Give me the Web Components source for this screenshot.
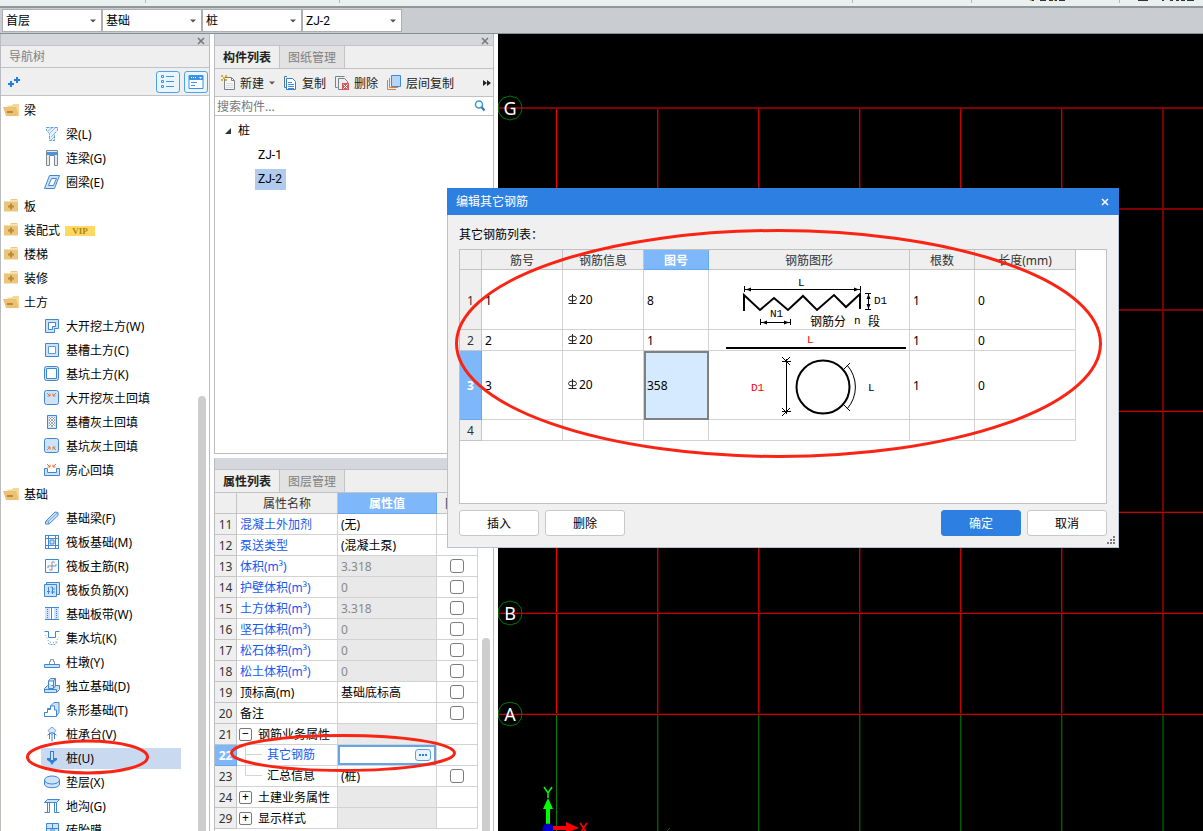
<!DOCTYPE html>
<html lang="zh-CN">
<head>
<meta charset="utf-8">
<title>编辑其它钢筋</title>
<style>
  html, body { height: 100%; margin: 0; }
  body { overflow: hidden; background: #fff; color: #000; font: 12px/16px "Noto Sans", "Noto Sans CJK SC", sans-serif; }
</style>
</head>
<body>
<modeling-app></modeling-app>
<script>
const BASE = `*{box-sizing:border-box} button,input,select{font:inherit;color:inherit;margin:0} ul{list-style:none;margin:0;padding:0} svg{display:block}`;
class View extends HTMLElement {
  constructor() {
    super();
    this.attachShadow({ mode: 'open' });
  }
  connectedCallback() {
    const t = document.createElement('template');
    t.innerHTML = `<style>${BASE}${this.css()}</style>${this.html()}`;
    this.shadowRoot.replaceChildren(t.content.cloneNode(true));
  }
  css() { return ':host{display:block}'; }
  html() { return '<slot></slot>'; }
}

/* ---------- icons ---------- */
const B = 'stroke="#3f86d3" fill="none"', L = 'stroke="#3f86d3" fill="#cfe3f8"', O = 'stroke="#e0763a" fill="none"', G = 'stroke="#87929a" fill="none"';
const ICONS = {
  open: '<path d="M4 3.500h5l1-1.500h6v11h-3z" fill="#f4d79b"/><path d="M0 5h13l3 9H3z" fill="#ecc176"/><path d="M4 9h6v2H4z" fill="#b98a35"/>',
  closed: '<path d="M1 3h14v10.500H1z" fill="#ecc57c"/><path d="M8 1h6l1 1.500H7z" fill="#ecc57c"/><path d="M1 3h14v1H1z" fill="#f6dca6"/><path d="M7 5.500h2v2h2v2H9v2H7v-2H5v-2h2z" fill="#b98a35"/>',
  beam: `<path d="M2.500 1.500h11v3l-3 3v7h-5v-7l-3-3z" fill="#e8f2fd" stroke="#5b9ce0" stroke-dasharray="3 1"/><path d="M4 5l4-3M6 7l5-5M7 11l3-3M7 14l3-3" stroke="#8fb9e8"/>`,
  link: '<path d="M2.500 15.500v-15h11v15h-3v-10h-5v10z" fill="#e6eaed" stroke="#7d8a93"/><path d="M3 2h10v3H3z" fill="#4b93df"/>',
  ring: `<path d="M5.500 1.500h10l-5 13h-10z" ${L}/><path d="M7.500 4.500h5l-3 7h-5z" fill="#fff" stroke="#3f86d3"/>`,
  dig: `<path d="M1.500 1.500h13v9h-4v4h-9z" ${L}/><path d="M4.500 4.500h7v4h-3v3h-4z" fill="#fff" stroke="#3f86d3"/>`,
  trench: `<path d="M1.500 1.500h13v13h-13z" ${L}/><path d="M4.500 4.500h7v7h-7z" fill="#fff" stroke="#5b9ce0"/>`,
  pit: `<rect x=".5" y=".5" width="14" height="14" rx="2" ${L}/><path d="M2.500 2.500h10v10h-10z" fill="#fff" stroke="#3f86d3"/>`,
  fillA: `<rect x=".5" y=".5" width="14" height="14" rx="2" ${L}/><path d="M3 3l3 3M6 3.500v2.500H3.500M12 3L9 6M9 3.500v2.500h2.500" ${O}/>`,
  hatch: `<path d="M3.500 1.500h9v13h-9z" ${L}/><path d="M5 3h6v10H5z" fill="#fff"/><path d="M5 6l3-3M5 9l6-6M5 12l6-6M7 13l4-4M5 9l4 4M5 6l6 6M5 3l6 6M8 3l3 3" stroke="#78828a" stroke-width=".7"/>`,
  fillB: `<rect x=".5" y=".5" width="14" height="14" rx="2" ${L}/><path d="M3 12l3-3M3.500 9H6v2.500M12 12L9 9M11.500 9H9v2.500" ${O}/>`,
  room: `<path d="M.5 6.500h3v4h9v-4h3v7H.5z" ${L}/><path d="M3 2l3 3M6 2.500V5H3.500M12 2L9 5M9 2.500V5h2.500" ${O}/>`,
  fbeam: `<path d="M1.500 11.500L11 2l3 .5v3L5 14H1.500z" ${L}/><path d="M1.500 11.500l3-.5L14 2.500M4.500 11v3" stroke="#6ba6e4" fill="none"/>`,
  raft: `<path d="M1 1.500h14M1 4.500h14M1 11.500h14M1 14.500h14M1.500 1v14M4.500 1v14M11.500 1v14M14.500 1v14" ${B}/><path d="M6 6h4v4H6z" fill="#cfe3f8" stroke="#3f86d3"/>`,
  rmain: `<path d="M1.500 1.500h13v13h-13z" fill="#f4f9ff" stroke="#3f86d3"/><path d="M8 12V4q2-1 2.500 1M8 12q-2 1-2.500-1M4 10V8h8v-2" ${G}/>`,
  rneg: `<path d="M2.500 3V.5h13v12H13" ${L}/><path d="M.5 2.500h12v12H.5z" ${L}/><path d="M4.500 5v7M8.500 5v7M3 9.500h3M8 7h3M7 10h4M6.500 5h2" ${B}/>`,
  band: `<path d="M1 2h5v11H1zM10 2h5v11h-5z" fill="#cfe3f8"/><path d="M1 1.500h14M1 13.500h14M7.500 2v11" ${B}/><path d="M3.500 3v9M12.500 3v9" stroke="#3f86d3" stroke-dasharray="1 1"/>`,
  sump: `<path d="M.5 1.500h4v6h7v-6h4" ${B}/><path d="M1 5l4 7 6 1 4-6" stroke="#87929a" fill="none" stroke-dasharray="1 2"/><path d="M4 13l2 1.500h5L14 11" stroke="#6ba6e4" fill="none" stroke-dasharray="2 1"/>`,
  pier: `<path d="M.5 10.500h15v3H.5z" ${L}/><path d="M5.500 10V7.500h1v-2h3v2h1V10" ${G}/>`,
  iso: `<path d="M.5 10.500l3-3h12v4l-3 3H.5z" ${L}/><path d="M4.500 10.500V3l2-2.500h5V8l-2 2.500zM9.500 10.500V3h-5M9.500 3l2-2.500M.5 11.500h12v3" ${L}/>`,
  strip: `<path d="M.5 14.500v-4h3v-4h3V4L10 .5h5v10l-3 4z" ${L}/><path d="M.5 14.500v-4h3v-3h3V4h4v4h2v6.500z" fill="#fff" stroke="#3f86d3"/>`,
  cap: `<path d="M8 1l4 3.500L8 9 4 4.500z" fill="#dfe6ec" stroke="#6ba6e4"/><path d="M8 9v6.500M5.500 7v6M10.500 7v6M3.500 9L8 6.500 12.500 9" ${B}/>`,
  pile: '<path d="M6 1h4v7h3v2l-3 2-2 3-2-3-3-2V8h3z" fill="#2f7fd8"/><path d="M7 2h2v8H7z" fill="#cfe3f8"/>',
  cushion: `<path d="M.5 6v4c0 5 15 5 15 0V6" ${L}/><ellipse cx="8" cy="6" rx="7.500" ry="4" ${L}/>`,
  ditch: `<path d="M3.500 4v10.500h-3M12.500 4v10.500h3M5.500 5v9.500H3M10.500 5v9.500h2" ${B}/><path d="M3.500 1.500h12l-3 3H.5z" ${L}/>`,
  brick: `<path d="M2.500 1.500h12v13h-12z" ${L}/><path d="M3 6.500h11M8.500 2v4M6 8h5" ${B}/>`,
  plus: '<path d="M10 3h2v2h2v2h-2v2h-2V7H8V5h2zM4 7h2v2h2v2H6v2H4v-2H2V9h2z" fill="#1f7fe0"/>',
  list: '<path d="M1.500 1.500h2v2h-2zM1.500 6.500h2v2h-2zM1.500 11.500h2v2h-2z" fill="none" stroke="#3a93e6"/><path d="M6 2.500h8M6 7.500h8M6 12.500h8" stroke="#3a93e6"/>',
  card: '<path d="M1 1.500h14v13H1z" fill="#fff" stroke="#3a93e6"/><path d="M1 1h14v5H1z" fill="#3a93e6"/><path d="M3 3h1v1H3zM5 3h1v1H5zM7 3h1v1H7zM11 3h3l-1.500 2z" fill="#fff"/><path d="M3 8.500h6M3 11.500h4" stroke="#3a93e6"/>',
  create: '<path d="M3.500 2.500h7l3 3v9h-10z" fill="#f8f8f8" stroke="#75828a"/><path d="M10.500 3v2.500H13" fill="none" stroke="#75828a"/><path d="M5 8.500h7M5 10.500h7M5 12.500h7" stroke="#dadada"/><path d="M0 0h2v2H0zM4 0h2v2H4zM2 2h2v2H2zM0 4h2v2H0zM4 4h2v2H4z" fill="#efa72f"/>',
  copy: '<path d="M4 1.500H1.500v11H4" fill="none" stroke="#5c7587"/><path d="M3.500 3.500h6l3 3v8h-9z" fill="#fff" stroke="#2f7fd0"/><path d="M5 7.500h4M5 9.500h6M5 11.500h6M5 13.500h6" stroke="#3f8ada"/>',
  remove: '<path d="M2.500 12.500h-2V1.500h9" fill="none" stroke="#75828a"/><path d="M7 14.500H3.500v-11h6l3 3V8" fill="none" stroke="#75828a"/><path d="M7 8h7v7H7z" fill="#d4575c"/><path d="M8.500 9.500l4 4M12.500 9.500l-4 4" stroke="#fff"/>',
  layers: '<path d="M.5 5v9.500H9M2.500 3v9.500H11" fill="none" stroke="#e57b32"/><path d="M4.500.5h9v11h-9z" fill="#b5d5fb" stroke="#3f8ada"/>',
  search: '<circle cx="7" cy="6.500" r="3.500" fill="#fff" stroke="#3b97cf" stroke-width="1.500"/><path d="M9.500 9l3 3.500" stroke="#2d78ad" stroke-width="2"/>',
  close: '<path d="M5 5l6 6M11 5l-6 6" stroke="currentColor" stroke-width="1.500"/>',
  more: '<path d="M4 5l4 3-4 3zM8 5l4 3-4 3z" fill="#222"/>',
  arrow: '<path d="M5 6.500h6l-3 3z" fill="#555"/>',
  twist: '<path d="M11 5v6H5z" fill="#333"/>',
  rebar: '<ellipse cx="6.500" cy="6.500" rx="4" ry="2.500" fill="none" stroke="#222"/><path d="M6.500 2v10M2.500 11.500h8" stroke="#222"/>',
  dots: '<path d="M4 7h2v2H4zM7 7h2v2H7zM10 7h2v2h-2z" fill="#2f7fd8"/>'
};
customElements.define('ui-icon', class extends View {
  css() { return ':host{display:block;flex:none;width:16px;height:16px}'; }
  html() { return `<svg width="16" height="16" viewBox="0 0 16 16" aria-hidden="true">${ICONS[this.getAttribute('name')]}</svg>`; }
});

/* ---------- top bars ---------- */
customElements.define('ribbon-edge', class extends View {
  css() { return `:host{display:grid;grid-template-columns:146px 194px 513px 119px 148px 1fr;height:8px;background:#eaeff0;border-bottom:2px solid #8f9797}
    i{height:3px;border-right:1px solid #b4b8ba} svg{height:1px;width:80px}`; }
  html() { return `<i></i><i></i><i></i><i></i><i><svg viewBox="0 0 80 1" style="margin-left:56px"><path d="M2 .5h4M12 .5h6M21 .5h4M27 .5h2M31 .5h6" stroke="#333"/><path d="M2 .5h2M26 .5h1" stroke="#e09030"/></svg></i><svg viewBox="0 0 80 1"><path d="M18 .5h10M42 .5h2M50 .5h3M56 .5h3M61 .5h4M67 .5h7" stroke="#333"/></svg>`; }
});
customElements.define('tool-select', class extends View {
  css() { return `:host{display:block;position:relative;width:100px}
    select{display:block;width:100%;height:23px;appearance:none;border:1px solid #acaeb0;border-radius:0;background:#fff;padding:0 18px 0 3px;outline:0}
    ui-icon{position:absolute;right:1px;top:4px;pointer-events:none}`; }
  html() { const v = this.getAttribute('value'); return `<select aria-label="${this.getAttribute('label')}"><option>${v}</option></select><ui-icon name="arrow"></ui-icon>`; }
});
customElements.define('context-bar', class extends View {
  css() { return ':host{display:flex;align-items:center;height:26px;padding:0 2px;background:#c9cdd2;border-bottom:1px solid #868e90} ::slotted(:last-child){font-family:Roboto,sans-serif}'; }
});

/* ---------- dock panels ---------- */
customElements.define('dock-panel', class extends View {
  css() { return `:host{display:flex;flex-direction:column;min-height:0;border:1px solid #b9bcc0;border-top:0;background:#fff}
    header{flex:none;display:flex;justify-content:flex-end;align-items:center;height:12px;background:#d5d7dc;border-bottom:1px solid #c0c3c8;color:#777;overflow:hidden}
    button{border:0;background:none;padding:2px 0 0}`; }
  html() { return '<header><button aria-label="关闭"><ui-icon name="close"></ui-icon></button></header><slot></slot>'; }
});
customElements.define('tab-strip', class extends View {
  css() { return `:host{flex:none;display:flex;height:23px;background:#efefef;border-bottom:1px solid #c0c3c8}
    button{border:0;border-right:1px solid #c0c3c8;width:65px;padding:2px 0 0;background:#e2e2e2;color:#808080;height:22px}
    button[aria-selected=true]{background:#efefef;color:#222;font-weight:bold}`; }
  html() { return this.getAttribute('tabs').split(',').map((t, i) => `<button role="tab" aria-selected="${!i}">${t}</button>`).join(''); }
});

const TREE = [['open','梁'],['beam','梁(L)'],['link','连梁(G)'],['ring','圈梁(E)'],['closed','板'],['closed','装配式'],['closed','楼梯'],['closed','装修'],['open','土方'],
  ['dig','大开挖土方(W)'],['trench','基槽土方(C)'],['pit','基坑土方(K)'],['fillA','大开挖灰土回填'],['hatch','基槽灰土回填'],['fillB','基坑灰土回填'],['room','房心回填'],['open','基础'],
  ['fbeam','基础梁(F)'],['raft','筏板基础(M)'],['rmain','筏板主筋(R)'],['rneg','筏板负筋(X)'],['band','基础板带(W)'],['sump','集水坑(K)'],['pier','柱墩(Y)'],['iso','独立基础(D)'],
  ['strip','条形基础(T)'],['cap','桩承台(V)'],['pile','桩(U)'],['cushion','垫层(X)'],['ditch','地沟(G)'],['brick','砖胎膜']];
customElements.define('nav-tree', class extends View {
  css() { return `:host{display:flex;flex-direction:column;flex:1;min-height:0}
    h2{flex:none;margin:0;height:22px;padding:3px 8px 0;font:inherit;color:#808080;background:#efefef;border-bottom:1px solid #c0c3c8}
    nav{flex:none;display:flex;align-items:center;height:28px;gap:4px;padding:0 1px 0 5px;background:#efefef;border-bottom:1px solid #c0c3c8}
    nav ui-icon[name=plus]{margin-right:auto}
    nav button{display:grid;place-items:center;width:24px;height:22px;padding:0;border:1px solid #4ba3ee;border-radius:3px;background:#eaf5fe}
    .scroll{flex:1;min-height:0;display:flex;overflow:hidden}
    ul{flex:1;padding-top:2px}
    li{display:flex;align-items:center;height:24px}
    li span{display:flex;align-items:center;height:21px;padding-top:2px}
    li ui-icon{margin-top:-2px}
    .group span{gap:5px;padding-left:2px}
    .leaf span{width:140px;margin-left:40px;padding-left:3px;gap:6px}
    .on span{background:#c9d9ef}
    b{width:30px;height:10px;background:#ffd95f;color:#a98519;font:bold 9px/10px "Liberation Serif",serif;text-align:center}
    .bar{width:8px;margin:300px 3px 0 0;border-radius:4px 4px 0 0;background:#cdcdcd}`; }
  html() {
    const rows = TREE.map(([i, t]) => {
      const g = i === 'open' || i === 'closed';
      return `<li class="${g ? 'group' : 'leaf'}${i === 'pile' ? ' on' : ''}"><span><ui-icon name="${i}"></ui-icon>${t}${t === '装配式' ? '<b>VIP</b>' : ''}</span></li>`;
    }).join('');
    return `<h2>导航树</h2><nav><ui-icon name="plus"></ui-icon><button aria-label="列表"><ui-icon name="list"></ui-icon></button><button aria-label="卡片"><ui-icon name="card"></ui-icon></button></nav>
      <div class="scroll"><ul>${rows}</ul><div class="bar"></div></div>`;
  }
});

customElements.define('component-list', class extends View {
  css() { return `:host{display:flex;flex-direction:column;flex:1;min-height:0}
    nav{flex:none;display:flex;align-items:center;height:28px;padding-left:6px;background:#efefef;border-bottom:1px solid #c0c3c8;color:#222}
    nav button{display:flex;align-items:center;gap:3px;border:0;background:none;padding:2px 0 0;margin-right:9px;white-space:nowrap}
    nav ui-icon{margin-top:-2px}
    nav .new{gap:0;margin-right:3px} .new ui-icon[name=create]{margin-right:3px}
    nav .more{margin:0 -2px 0 auto}
    label{flex:none;display:flex;align-items:center;height:19px;padding-right:5px;border-bottom:1px solid #c0c3c8}
    input{flex:1;min-width:0;border:0;outline:0;padding:0 2px;height:18px} input::placeholder{color:#777;opacity:1}
    ul{padding-top:3px} li{display:flex;align-items:center;height:24px;padding-left:40px}
    .root{padding-left:5px;gap:2px}
    span{width:31px;height:21px;padding:2px 3px;font-family:Roboto,sans-serif} .on{background:#b1cbee}`; }
  html() { return `<nav><button class="new"><ui-icon name="create"></ui-icon>新建<ui-icon name="arrow"></ui-icon></button><button><ui-icon name="copy"></ui-icon>复制</button><button><ui-icon name="remove"></ui-icon>删除</button><button><ui-icon name="layers"></ui-icon>层间复制</button><button class="more" aria-label="更多"><ui-icon name="more"></ui-icon></button></nav>
    <label><input aria-label="搜索构件" placeholder="搜索构件..."><ui-icon name="search"></ui-icon></label>
    <ul><li class="root"><ui-icon name="twist"></ui-icon>桩</li><li><span>ZJ-1</span></li><li><span class="on">ZJ-2</span></li></ul>`; }
});

/* number, name, value, kind: b = blue, g = blue with locked value, n = plain, h = group, e = edited child, c = child */
const PROPS = [[11,'混凝土外加剂','(无)','b'],[12,'泵送类型','(混凝土泵)','b'],[13,'体积(m³)','3.318','g'],[14,'护壁体积(m³)','0','g'],[15,'土方体积(m³)','3.318','g'],[16,'坚石体积(m³)','0','g'],[17,'松石体积(m³)','0','g'],[18,'松土体积(m³)','0','g'],
  [19,'顶标高(m)','基础底标高','n'],[20,'备注','','n'],[21,'钢筋业务属性','','h'],[22,'其它钢筋','','e'],[23,'汇总信息','(桩)','c'],[24,'土建业务属性','','h'],[29,'显示样式','','h']];
customElements.define('property-table', class extends View {
  css() { return `:host{display:flex;flex:1;min-height:0;overflow:hidden;justify-content:space-between;align-items:flex-start}
    table{table-layout:fixed;width:263px;border-spacing:0}
    th,td{height:21px;padding:2px 0 0 3px;border:solid #d2d2d2;border-width:0 1px 1px 0;text-align:left;font-weight:normal;white-space:nowrap;overflow:hidden}
    th{background:#efefef;color:#333;text-align:center;padding:2px 0 0;border-color:#c4c4c4}
    thead .sel,.e th{background:#7fb8fa;color:#fff;font-weight:bold;border-color:#66a8f0}
    .b td:nth-child(2),.g td:nth-child(2),.e td:nth-child(2){color:#1759f0}
    .g td:nth-child(3),.h td:nth-child(3){background:#e9e9e9;color:#888}
    td:nth-child(4){padding:0;text-align:center}
    input[type=checkbox]{appearance:none;display:block;margin:0 auto;width:14px;height:14px;border:1px solid #7c7c7c;border-radius:3px;background:#fff}
    .h div{display:flex;align-items:center;gap:6px;margin-left:-1px}
    .h button{width:13px;height:13px;margin-top:-2px;border:1px solid #777;border-radius:2px;background:#fff;padding:0;font-size:12px;line-height:10px}
    .e td:nth-child(2),.c td:nth-child(2){padding:0 0 0 8px}
    .e div,.c div{display:flex;align-items:center}
    .e td:nth-child(2) div,.c td:nth-child(2) div{line-height:20px}
    .line{width:17px;height:20px;margin-right:5px;flex:none}
    .e td:nth-child(3){padding:0}
    .edit{height:20px;border:2px solid #64a5ea} .edit input{flex:1;min-width:0;border:0;outline:0;padding:0 2px;height:16px}
    .edit button{flex:none;width:16px;height:12px;padding:0;margin-right:3px;border:1px solid #5a9fe6;border-radius:3px;background:#e8f3fe;display:flex;align-items:center;justify-content:center}
    .bar{flex:none;width:8px;height:100%;margin:145px 3px 0 0;border-radius:4px 4px 0 0;background:#cdcdcd}`; }
  html() {
    const rows = PROPS.map(([n, name, v, k]) => {
      let cell = name, val = v;
      if (k === 'h') cell = `<div><button aria-label="${name}">${n === 21 ? '−' : '+'}</button>${name}</div>`;
      if (k === 'e' || k === 'c') cell = `<div><svg class="line" viewBox="0 0 17 20"><path d="M.5 0V${k === 'e' ? 20 : 9.5}M.5 9.5H17" fill="none" stroke="#d4d4d4"/></svg>${name}</div>`;
      if (k === 'e') val = '<div class="edit"><input aria-label="其它钢筋"><button aria-label="编辑"><ui-icon name="dots"></ui-icon></button></div>';
      const box = 'gnc'.includes(k) ? `<input type="checkbox" aria-label="附加 ${name}">` : '';
      return `<tr class="${k}"><th scope="row">${n}</th><td>${cell}</td><td>${val}</td><td>${box}</td></tr>`;
    }).join('');
    return `<table><colgroup><col style="width:22px"><col style="width:101px"><col style="width:99px"><col style="width:41px"></colgroup><thead><tr><th></th><th>属性名称</th><th class="sel">属性值</th><th>附加</th></tr></thead><tbody>${rows}</tbody></table><div class="bar"></div>`;
  }
});

/* ---------- drawing area ---------- */
customElements.define('cad-canvas', class extends View {
  css() { return ':host{display:block;position:relative;overflow:hidden;background:#000} svg{position:absolute;inset:0;width:100%;height:100%} text{font-family:"Noto Sans",sans-serif}'; }
  html() {
    /* one straight grid line: a bright core with a dim fringe, or a flat two-pixel line */
    const line = (d, n, core, fringe) => `<path d="${d(n + 1)}" stroke="${fringe}"/><path d="${d(n)}" stroke="${core}"/>`;
    let s = '';
    for (let i = 0; i < 7; i++) {
      const x = 58 + 101 * i;
      s += line(n => `M${n}.5 74V680`, x, i === 0 ? '#f00' : i === 6 ? '#7c0000' : '#c40000', i === 0 ? '#000' : i === 6 ? '#7c0000' : '#500000');
      s += line(n => `M${n}.5 681V3000`, x, i === 0 ? '#008000' : i === 6 ? '#004000' : '#006000', i === 0 ? '#000' : i === 6 ? '#004000' : '#002800');
    }
    for (let i = 0; i < 7; i++) {
      if (i > 0 && i < 0) continue;
      s += line(n => `M0 ${n}.5H4000`, 73 + 101 * i, i < 3 ? '#800000' : '#400000', i < 3 ? '#800000' : '#c80000');
    }
    for (const [t, y] of [['G', 74], ['B', 579], ['A', 680]])
      s += `<path transform="translate(12 ${y})" d="M0-12l7 2 4 5 1 5-1 5-4 5-7 2-7-2-4-5-1-5 1-5 4-5z" fill="none" stroke="#007800"/><text x="12" y="${y + 7}" fill="#fff" font-size="18" text-anchor="middle">${t}</text>`;
    return `<svg>${s}<path d="M48 792v-17h-3l5-11 5 11h-3v17z" fill="#0f0"/><path d="M54 792h14v-4l13 6-13 5v-3H54z" fill="#f00"/><circle cx="50" cy="795" r="5.500" fill="#0000c8"/>
      <path d="M46 753l4 6 4-6M50 759v5" fill="none" stroke="#0f0" stroke-width="1.500"/><path d="M82 789l7 10M89 789l-7 10" stroke="#f00" stroke-width="1.500"/><path d="M169 797l3-3" stroke="#006000"/></svg>`;
  }
});

/* ---------- dialog ---------- */
const SHAPES = {
  zig: `<svg width="200" height="59" viewBox="0 0 200 59"><g fill="none" stroke="#000"><path d="M35.500 16v6M151.500 16v6M36 19.500h115M159.500 23v17M156 23.500h6M156 39.500h6M51.500 49v6M81.500 49v6M52 52.500h29"/><path stroke-width="2" d="M35 41V25l16 15 14-12 14 12 15-14 14 14 17-15 12 12 14-13v15"/></g>
    <path d="M37 19.500l5-2v4zM150 19.500l-5-2v4zM53 52.500l5-2v4zM80 52.500l-5-2v4zM159.500 24l-2 5h4zM159.500 39l-2-5h4z"/><text x="89" y="16">L</text><text x="165" y="34">D1</text><text x="61" y="47">N1</text><text class="cn" x="101" y="56">钢筋分</text><text x="145" y="54">n</text><text class="cn" x="159" y="56">段</text></svg>`,
  bar: `<svg width="200" height="20" viewBox="0 0 200 20"><path d="M17 18h180" stroke="#000" stroke-width="2"/><text x="98" y="13" fill="red">L</text></svg>`,
  ring: `<svg width="200" height="68" viewBox="0 0 200 68"><g fill="none" stroke="#000"><path d="M77.500 8v55M73 10.500h9M73 60.500h9M73 6l8 8M81 57l-8 8M81 6l-4 4M73 57l4 4"/><path d="M138 14a33 33 0 0 1 0 44M134 19l7-7M134 53l7 7"/><circle cx="114" cy="36" r="26.500" stroke-width="2"/></g><text x="42" y="40" fill="red">D1</text><text x="159" y="40">L</text></svg>`
};
customElements.define('rebar-table', class extends View {
  css() { return `:host{display:block} table{table-layout:fixed;width:616px;border-spacing:0}
    th,td{height:21px;padding:2px 0 0 3px;border:solid #d2d2d2;border-width:0 1px 1px 0;font-weight:normal;text-align:left;white-space:nowrap;overflow:hidden}
    th{padding:2px 0 0;text-align:center;background:#efefef;color:#333;border-color:#c4c4c4}
    thead th{height:20px} .tall td{height:60px} .ring td{height:69px}
    td:nth-child(5){padding:0} td:nth-child(3){padding-top:0} .sel{background:#7fb8fa;color:#fff;font-weight:bold;border-color:#66a8f0}
    .cur{background:#d5e9ff;outline:2px solid #808080;outline-offset:-2px}
    div{display:flex;align-items:center} text{font:11px "Liberation Mono",monospace} .cn{font:12px "Noto Sans CJK SC",sans-serif}
    ui-icon{width:13px}`; }
  html() {
    const r = [[1, '8', 'zig', 'tall'], [2, '1', 'bar', 'bar'], [3, '358', 'ring', 'ring']].map(([n, no, s, c]) =>
      `<tr class="${c}"><th scope="row" class="${n === 3 ? 'sel' : ''}">${n}</th><td>${n}</td><td><div><ui-icon name="rebar"></ui-icon>20</div></td><td class="${n === 3 ? 'cur' : ''}">${no}</td><td>${SHAPES[s]}</td><td>1</td><td>0</td></tr>`).join('');
    return `<table><colgroup>${[22, 81, 81, 65, 201, 65, 101].map(w => `<col style="width:${w}px">`).join('')}</colgroup><thead><tr><th></th><th>筋号</th><th>钢筋信息</th><th class="sel">图号</th><th>钢筋图形</th><th>根数</th><th>长度(mm)</th></tr></thead><tbody>${r}<tr><th scope="row">4</th><td></td><td></td><td></td><td></td><td></td><td></td></tr></tbody></table>`;
  }
});
customElements.define('rebar-dialog', class extends View {
  css() { return `:host{display:flex;flex-direction:column;width:672px;height:360px;background:#f0f0f0;border:1px solid #b5c3d4;border-top:0}
    header{flex:none;display:flex;justify-content:space-between;align-items:center;height:27px;margin:0 -1px;padding:0 6px 0 9px;background:#2d80e2;color:#fff}
    header button{border:0;background:none;padding:0}
    p{margin:0;padding:12px 11px 6px;line-height:16px}
    .box{flex:1;margin:0 11px;border:1px solid #c0c0c0;background:#fff}
    footer{display:flex;gap:6px;padding:6px 11px 11px}
    footer button{width:80px;height:26px;padding:2px 0 0;border:1px solid #c8c8c8;border-radius:3px;background:#fff}
    footer .ok{margin-left:auto;background:#2d80e2;border-color:#2d80e2;color:#fff}
    .grip{position:absolute;right:3px;bottom:3px}`; }
  html() { return `<header>编辑其它钢筋<button aria-label="关闭"><ui-icon name="close"></ui-icon></button></header><p>其它钢筋列表：</p><div class="box"><rebar-table></rebar-table></div>
    <footer><button>插入</button><button>删除</button><button class="ok">确定</button><button>取消</button></footer>
    <svg class="grip" width="8" height="8"><path d="M6 0h2v2H6zM6 3h2v2H6zM3 3h2v2H3zM0 6h2v2H0zM3 6h2v2H3zM6 6h2v2H6z" fill="#7a7f85"/></svg>`; }
});

customElements.define('modeling-app', class extends View {
  css() { return `:host{position:relative;display:flex;flex-direction:column;height:100vh}
    ribbon-edge,context-bar{flex:none} main{flex:1;min-height:0;display:flex;gap:4px}
    .left{width:210px;flex:none}
    .mid{width:280px;flex:none;display:flex;flex-direction:column;gap:4px}
    .upper{flex:0 0 420px} .lower{flex:1;border-bottom:0} .left{border-bottom:0}
    cad-canvas{flex:1}
    rebar-dialog{position:absolute;left:447px;top:188px}
    .marks{position:absolute;inset:0;width:100%;height:100%;pointer-events:none}`; }
  html() { return `<ribbon-edge></ribbon-edge>
    <context-bar><tool-select label="楼层" value="首层"></tool-select><tool-select label="专业" value="基础"></tool-select><tool-select label="类型" value="桩"></tool-select><tool-select label="构件" value="ZJ-2"></tool-select></context-bar>
    <main><dock-panel class="left"><nav-tree></nav-tree></dock-panel>
    <div class="mid"><dock-panel class="upper"><tab-strip tabs="构件列表,图纸管理"></tab-strip><component-list></component-list></dock-panel>
    <dock-panel class="lower"><tab-strip tabs="属性列表,图层管理"></tab-strip><property-table></property-table></dock-panel></div>
    <cad-canvas></cad-canvas></main>
    <rebar-dialog></rebar-dialog>
    <svg class="marks" fill="none" stroke="#fa2414"><ellipse cx="778.500" cy="343.500" rx="322" ry="113" stroke-width="3"/><ellipse cx="343" cy="753" rx="111.500" ry="17.500" stroke-width="3"/><ellipse cx="87.500" cy="757" rx="60" ry="16" stroke-width="3"/></svg>`; }
});
</script>
</body>
</html>
